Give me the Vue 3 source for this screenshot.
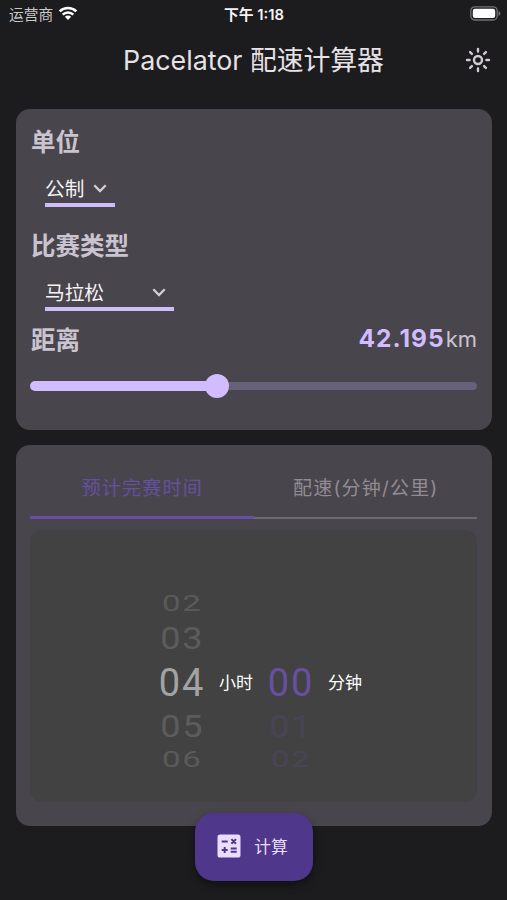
<template>
    <div class="page">
        <div class="status-bar">
            <div class="carrier">
                <span>运营商</span>
                <svg class="wifi" viewBox="0 0 20 15">
                    <path d="M1.7 5.3a11.8 11.8 0 0 1 16.6 0M4.7 8.6a7.5 7.5 0 0 1 10.6 0" fill="none" stroke="#fff" stroke-width="2.5" />
                    <path d="M10 14l-3.1-3.2a4.4 4.4 0 0 1 6.2 0z" fill="#fff" />
                </svg>
            </div>
            <div class="clock">下午 1:18</div>
            <svg class="battery" viewBox="0 0 31 15">
                <rect x="0.8" y="0.8" width="26.4" height="13.2" rx="4" fill="none" stroke="#727274" stroke-width="1.3" />
                <rect x="2.8" y="2.7" width="22.4" height="9.4" rx="2.3" fill="#fff" />
                <path d="M28.5 5v5q1.9-.8 1.9-2.5t-1.9-2.5z" fill="#727274" />
            </svg>
        </div>

        <div class="title-bar">
            <h1>Pacelator 配速计算器</h1>
            <svg class="theme-icon" viewBox="0 0 26 26">
                <circle cx="13" cy="13" r="4" />
                <path d="M13 2v2.6M13 21.4v2.6M2 13h2.6M21.4 13h2.6M5.1 5.1l1.8 1.8M19.1 19.1l1.8 1.8M5.1 20.9l1.8-1.8M19.1 6.9l1.8-1.8" />
            </svg>
        </div>

        <div class="card settings">
            <h2>单位</h2>
            <div class="select unit">
                <span>{{ unit }}</span>
                <svg class="arrow" viewBox="0 0 14 9"><path d="M1.3 1.3L7 7l5.7-5.7" /></svg>
            </div>
            <h2 class="race-label">比赛类型</h2>
            <div class="select race">
                <span>{{ race }}</span>
                <svg class="arrow" viewBox="0 0 14 9"><path d="M1.3 1.3L7 7l5.7-5.7" /></svg>
            </div>
            <div class="distance-row">
                <h2>距离</h2>
                <div class="distance"><b>{{ distance }}</b><span>km</span></div>
            </div>
            <div class="slider">
                <div class="slider-fill" :style="{ width: percent + '%' }"></div>
                <div class="slider-thumb"></div>
                <div class="slider-rest"></div>
            </div>
        </div>

        <div class="card result">
            <div class="tabs">
                <div
                    v-for="(tab, index) in tabs"
                    :key="tab"
                    class="tab"
                    :class="{ active: index === activeTab }"
                    @click="activeTab = index"
                >{{ tab }}</div>
            </div>
            <div class="picker">
                <div class="wheel hours">
                    <div v-for="(item, index) in hours" :key="index" class="item" :class="'level-' + Math.abs(index - 2)">
                        <span>{{ item }}</span>
                    </div>
                </div>
                <div class="picker-unit">小时</div>
                <div class="wheel minutes">
                    <div v-for="(item, index) in minutes" :key="index" class="item" :class="'level-' + Math.abs(index - 2)">
                        <span>{{ item }}</span>
                    </div>
                </div>
                <div class="picker-unit">分钟</div>
            </div>
        </div>

        <button class="calculate">
            <svg viewBox="0 0 24 24">
                <rect x="0.5" y="0.5" width="23" height="23" rx="2.6" fill="#eaddff" />
                <path d="M4.7 7.4h6M4.7 16h6M7.7 13v6M13.7 14.5h6M13.7 17.7h6M14.4 5.1l4.6 4.6M19 5.1l-4.6 4.6" fill="none" stroke="#4f378b" stroke-width="2" />
            </svg>
            <span>计算</span>
        </button>
    </div>
</template>

<script setup>
    import { ref } from 'vue'

    const unit = ref('公制')
    const race = ref('马拉松')

    // 距离与滑块位置
    const distance = ref('42.195')
    const percent = ref(39.3)

    const tabs = ['预计完赛时间', '配速(分钟/公里)']
    const activeTab = ref(0)

    // 滚轮可见的五行，中间一行为选中值
    const hours = ref(['02', '03', '04', '05', '06'])
    const minutes = ref(['', '', '00', '01', '02'])
</script>

<style>
    body {
        background: #1c1b1e;
    }
</style>

<style scoped>
    .page {
        box-sizing: border-box;
        width: 507px;
        height: 900px;
        overflow: hidden;
        display: flex;
        flex-direction: column;
        background: #1c1b1e;
        color: #e6e1e5;
        font-family: Inter, 'Noto Sans CJK SC', sans-serif;
    }

    .status-bar {
        display: grid;
        grid-template-columns: 1fr auto 1fr;
        align-items: center;
        height: 26px;
        padding: 0 6px 0 9px;
    }

    .carrier {
        display: flex;
        align-items: center;
        gap: 5px;
        font-size: 14.7px;
        color: #c8c8c9;
    }

    .wifi {
        width: 20px;
        height: 15px;
    }

    .clock {
        margin-right: 2px;
        font-size: 14.8px;
        font-weight: 600;
        color: #f4f4f4;
    }

    .battery {
        width: 31px;
        height: 15px;
        justify-self: end;
    }

    .title-bar {
        display: grid;
        grid-template-columns: 1fr auto 1fr;
        align-items: center;
        height: 66px;
        padding: 0 16px;
    }

    h1 {
        grid-column: 2;
        margin: 2px 0 0;
        font-size: 26.8px;
        font-weight: 400;
        line-height: 65px;
        white-space: nowrap;
    }

    .theme-icon {
        width: 26px;
        height: 26px;
        justify-self: end;
        fill: none;
        stroke: #d0cbd0;
        stroke-width: 2.4;
        stroke-linecap: round;
    }

    .card {
        box-sizing: border-box;
        flex: none;
        margin: 0 15px 0 16px;
        padding: 0 15px 0 14px;
        border-radius: 14px;
        background: #49454c;
    }

    .settings {
        height: 321px;
        margin-top: 17px;
        padding-top: 17px;
    }

    h2 {
        margin: 0 0 0 1px;
        height: 33px;
        line-height: 33px;
        font-size: 24.5px;
        font-weight: 600;
        color: #c9c4cf;
    }

    .select {
        display: flex;
        align-items: center;
        justify-content: space-between;
        height: 30px;
        margin: 14px 0 0 15px;
        padding-right: 8px;
        border-bottom: 4px solid #cdbdf8;
        font-size: 19.7px;
        line-height: 30px;
        color: #f5f3f6;
    }

    .select span {
        padding-top: 2px;
    }

    .unit {
        width: 62px;
    }

    .race {
        width: 121px;
    }

    .arrow {
        width: 14px;
        height: 9px;
        fill: none;
        stroke: #d3ced5;
        stroke-width: 2.3;
    }

    .race-label {
        margin-top: 23px;
    }

    .distance-row {
        display: flex;
        justify-content: space-between;
        margin-top: 13px;
    }

    .distance {
        line-height: 29px;
        font-size: 22px;
        color: #cac4d0;
    }

    .distance b {
        margin-right: 1px;
        font-size: 24.5px;
        font-weight: 700;
        letter-spacing: 1px;
        color: #d0bcff;
    }

    .slider {
        display: flex;
        align-items: center;
        height: 24px;
        margin-top: 17px;
    }

    .slider-fill {
        height: 10px;
        border-radius: 5px 0 0 5px;
        background: #d0bcff;
    }

    .slider-thumb {
        flex: none;
        z-index: 1;
        width: 24px;
        height: 24px;
        margin-left: -1px;
        border-radius: 50%;
        background: #d0bcff;
    }

    .slider-rest {
        flex: 1;
        height: 8px;
        margin-left: -2px;
        border-radius: 0 4px 4px 0;
        background: #676079;
    }

    .result {
        height: 381px;
        margin-top: 15px;
    }

    .tabs {
        display: flex;
        height: 74px;
    }

    .tab {
        box-sizing: border-box;
        flex: 1;
        height: 74px;
        padding: 14px 0 0 1px;
        border-bottom: 2px solid #6c6870;
        text-align: center;
        font-size: 19px;
        line-height: 60px;
        letter-spacing: 1.2px;
        color: #908c93;
    }

    .tab.active {
        border-bottom: 3px solid #6750a4;
        color: #6351a0;
    }

    .picker {
        box-sizing: border-box;
        display: flex;
        align-items: center;
        justify-content: center;
        height: 272px;
        margin-top: 11px;
        padding: 32px 7px 0 0;
        border-radius: 12px;
        background: #424242;
    }

    .wheel {
        width: 60px;
        text-align: center;
        font-family: Roboto, sans-serif;
        font-size: 38px;
        letter-spacing: 2px;
    }

    .hours {
        margin-left: 14px;
        color: #a3a3a3;
    }

    .minutes {
        margin-left: 8px;
        color: #6750a4;
    }

    .item {
        display: flex;
        align-items: center;
        justify-content: center;
        height: 34px;
    }

    .level-0 {
        box-sizing: border-box;
        height: 54px;
        padding-top: 2px;
    }

    .level-1 span {
        transform: scale(0.95, 0.84);
        opacity: 0.27;
    }

    .level-2 span {
        transform: scale(0.87, 0.57);
        opacity: 0.25;
    }

    .minutes .level-1 span,
    .minutes .level-2 span {
        opacity: 0.2;
    }

    .picker-unit {
        width: 34px;
        margin: -2px 0 0 7px;
        font-size: 17px;
        white-space: nowrap;
        color: #fff;
    }

    .calculate {
        display: flex;
        align-items: center;
        justify-content: center;
        align-self: center;
        flex: none;
        gap: 13px;
        width: 118px;
        height: 68px;
        margin-top: -13px;
        padding: 0 2px 2px 0;
        border: none;
        border-radius: 19px;
        background: #4f378b;
        box-shadow: 0 4px 8px rgba(0, 0, 0, 0.4);
        color: #eaddff;
        font-family: inherit;
        font-size: 16.8px;
    }

    .calculate svg {
        width: 24px;
        height: 24px;
    }
</style>
